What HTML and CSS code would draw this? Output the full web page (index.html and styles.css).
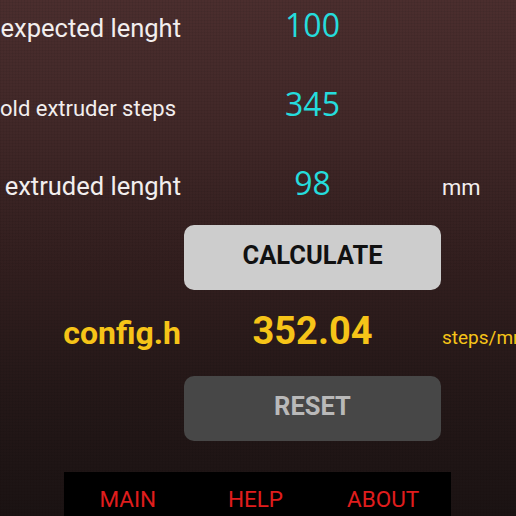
FILE: index.html
```html
<!DOCTYPE html>
<html lang="en">
<head>
  <meta charset="UTF-8">
  <title>Extruder Calibration</title>
  <link rel="stylesheet" href="styles.css">
</head>
<body>
  <div class="screen">
    <div class="calc">
      <div class="row row-first">
        <span class="label">expected lenght</span>
        <span class="value">100</span>
        <span class="unit"></span>
      </div>
      <div class="row">
        <span class="label label-small">old extruder steps</span>
        <span class="value">345</span>
        <span class="unit"></span>
      </div>
      <div class="row row-last">
        <span class="label">extruded lenght</span>
        <span class="value">98</span>
        <span class="unit">mm</span>
      </div>
      <div class="btn-row">
        <button class="btn btn-calc">CALCULATE</button>
      </div>
      <div class="row result">
        <span class="label">config.h</span>
        <span class="value">352.04</span>
        <span class="unit">steps/mm</span>
      </div>
      <div class="btn-row">
        <button class="btn btn-reset">RESET</button>
      </div>
    </div>
    <nav class="tabs">
      <a class="tab">MAIN</a>
      <a class="tab">HELP</a>
      <a class="tab">ABOUT</a>
    </nav>
  </div>
</body>
</html>
```

FILE: styles.css
```css
body {
  margin: 0;
  overflow: hidden;
  background: #1a1212;
  font-family: Roboto, "Liberation Sans", sans-serif;
}
.screen {
  width: 516px;
  height: 516px;
  overflow: hidden;
  background:
    repeating-linear-gradient(90deg, rgba(0,0,0,0.05) 0 1px, transparent 1px 3px),
    repeating-linear-gradient(0deg, rgba(0,0,0,0.05) 0 1px, transparent 1px 3px),
    linear-gradient(180deg, #4b2e2e 0%, #412828 25%, #331f1f 50%, #251818 75%, #1b1313 100%);
}
.calc {
  display: flex;
  flex-direction: column;
}
.row {
  display: grid;
  grid-template-columns: 184px 257px 1fr;
  align-items: baseline;
  height: 79px;
  box-sizing: border-box;
  padding-top: 5px;
  white-space: nowrap;
}
.row-last {
  height: 67px;
}
.label {
  color: #f2eeee;
  font-size: 25.5px;
  line-height: 40px;
  text-align: right;
  padding-right: 3px;
}
.label-small {
  font-size: 22px;
  padding-right: 9px;
}
.value {
  color: #25dcdc;
  font-family: "Open Sans", sans-serif;
  font-size: 32px;
  line-height: 40px;
  text-align: center;
}
.unit {
  color: #f2eeee;
  font-size: 22px;
  padding-left: 1px;
}
.btn-row {
  padding-left: 184px;
}
.btn {
  display: block;
  width: 257px;
  height: 65px;
  border: none;
  border-radius: 10px;
  padding: 0 0 6px;
  font-family: Roboto, sans-serif;
  font-weight: bold;
  font-size: 25.5px;
}
.btn-calc {
  background: #cdcdcd;
  color: #111;
}
.btn-reset {
  background: #474747;
  color: #b9b9b9;
}
.result {
  height: 86px;
  padding-top: 18px;
}
.result .label,
.result .value,
.result .unit {
  color: #f6c418;
  font-weight: bold;
}
.result .label {
  font-size: 32px;
  line-height: 46px;
}
.result .value {
  font-family: Roboto, sans-serif;
  font-size: 38px;
  line-height: 46px;
}
.result .unit {
  font-weight: normal;
  font-size: 19px;
}
.tabs {
  display: grid;
  grid-template-columns: repeat(3, 1fr);
  width: 387px;
  height: 60px;
  box-sizing: border-box;
  padding-right: 4px;
  margin: 31px 0 0 64px;
  background: #000;
}
.tab {
  color: #e01d1d;
  font-size: 22.5px;
  line-height: 24px;
  padding-top: 15px;
  text-align: center;
}
```
